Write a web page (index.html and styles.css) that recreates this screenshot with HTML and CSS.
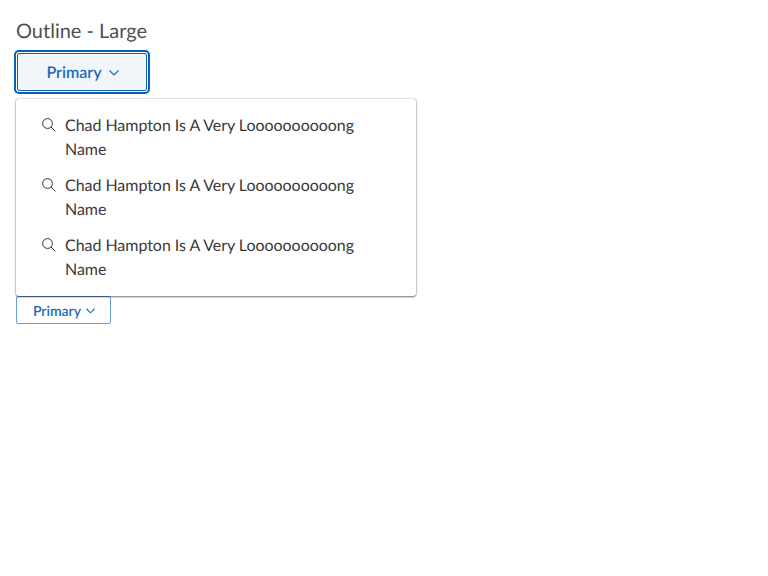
FILE: index.html
```html
<!DOCTYPE html>
<html lang="en">
<head>
<meta charset="utf-8">
<title>Outline buttons</title>
<link rel="stylesheet" href="styles.css">
</head>
<body>
<h4 class="title">Outline - Large</h4>
<div class="dropdown">
  <button class="btn btn-lg">Primary<svg class="chevron" viewBox="0 0 10 6"><path d="M.5.5 5 5 9.500.5"/></svg></button>
  <ul class="menu">
    <li class="item"><svg class="search" viewBox="0 0 14 14"><circle cx="5.500" cy="5.500" r="4.900"/><path d="m9 9 4.500 4.500"/></svg><span>Chad Hampton Is A Very Loooooooooong Name</span></li>
    <li class="item"><svg class="search" viewBox="0 0 14 14"><circle cx="5.500" cy="5.500" r="4.900"/><path d="m9 9 4.500 4.500"/></svg><span>Chad Hampton Is A Very Loooooooooong Name</span></li>
    <li class="item"><svg class="search" viewBox="0 0 14 14"><circle cx="5.500" cy="5.500" r="4.900"/><path d="m9 9 4.500 4.500"/></svg><span>Chad Hampton Is A Very Loooooooooong Name</span></li>
  </ul>
</div>
<button class="btn btn-sm">Primary<svg class="chevron" viewBox="0 0 10 6"><path d="M.5.5 5 5 9.500.5"/></svg></button>
</body>
</html>
```
FILE: styles.css
```css
* { box-sizing: border-box; }
body { margin: 0; padding: 16px; background: #fff; color: #3a3a3a; font: 16px/24px Lato, sans-serif; text-rendering: geometricPrecision; }
.title { margin: 0 0 7px; font-size: 20px; line-height: 30px; font-weight: 400; color: #505050; }
.dropdown { position: relative; height: 243px; }
.btn { display: flex; align-items: center; justify-content: center; padding: 0 0 0 1px; font-family: inherit; font-weight: 600; color: #1a68bb; background: #fff; border: 1px solid #6b9ed2; border-radius: 2px; text-rendering: inherit; }
.btn-lg { width: 130px; height: 38px; margin-left: 1px; gap: 7px; font-size: 16px; border-color: #0f62b4; background: #f1f6fb; box-shadow: 0 0 0 1px #fff, 0 0 0 3px #0b5fb5; }
.btn-sm { width: 95px; height: 28px; gap: 5px; font-size: 14px; }
.chevron { width: 10px; height: 6px; margin-top: 1px; fill: none; stroke: currentColor; stroke-width: 1.2; }
.btn-sm .chevron { width: 9px; }
.menu { position: absolute; top: 46px; left: 0; width: 400px; margin: 0; padding: 9px 0 8px; list-style: none; background: #fff; border-radius: 3px; box-shadow: 0 0 2px rgba(0,0,0,.3), 0 1px 2px rgba(0,0,0,.5); }
.item { display: flex; gap: 9px; padding: 6px 26px; letter-spacing: -.04px; }
.search { flex: none; width: 14px; height: 14px; margin-top: 4px; fill: none; stroke: #333; stroke-width: 1; }
```
